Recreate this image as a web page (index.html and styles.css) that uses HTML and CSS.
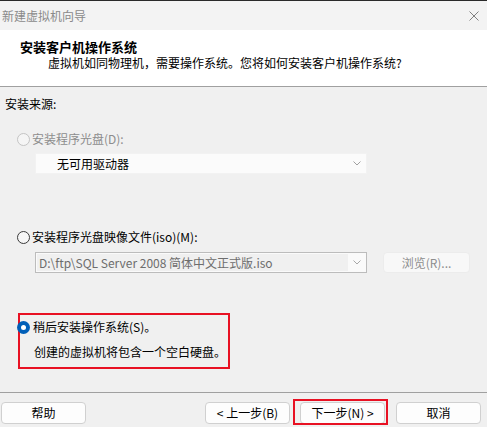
FILE: index.html
```html
<!DOCTYPE html>
<html lang="zh-CN">
<head>
<meta charset="utf-8">
<title>新建虚拟机向导</title>
<link rel="stylesheet" href="styles.css">
</head>
<body>
<div class="window">
  <div class="titlebar">
    <span class="title">新建虚拟机向导</span>
    <svg class="close" width="10" height="10" viewBox="0 0 10 10"><path d="M0.5 0.5L9.5 9.5M9.5 0.5L0.5 9.5" stroke="#808080" stroke-width="1" fill="none"/></svg>
  </div>
  <div class="header">
    <h1 class="head-title">安装客户机操作系统</h1>
    <p class="head-sub">虚拟机如同物理机，需要操作系统。您将如何安装客户机操作系统?</p>
  </div>
  <div class="content">
    <div class="label">安装来源:</div>
    <div class="radio-row row1 disabled">
      <span class="radio radio-disabled"></span>
      <span class="radio-text">安装程序光盘(D):</span>
    </div>
    <div class="combo combo-flat">
      <span class="combo-text">无可用驱动器</span>
      <svg class="chev" width="8" height="5" viewBox="0 0 8 5"><path d="M0.5 0.5L4 4L7.5 0.5" stroke="#a0a0a0" stroke-width="1" fill="none"/></svg>
    </div>
    <div class="radio-row row2">
      <span class="radio radio-off"></span>
      <span class="radio-text">安装程序光盘映像文件(iso)(M):</span>
    </div>
    <div class="iso-row">
      <div class="combo combo-box">
        <span class="combo-field">D:\ftp\SQL Server 2008 简体中文正式版.iso</span>
        <svg class="chev" width="8" height="5" viewBox="0 0 8 5"><path d="M0.5 0.5L4 4L7.5 0.5" stroke="#a8a8a8" stroke-width="1" fill="none"/></svg>
      </div>
      <div class="browse">浏览(R)...</div>
    </div>
    <div class="later">
      <div class="radio-row row3">
        <span class="radio radio-on"></span>
        <span class="radio-text dark">稍后安装操作系统(S)。</span>
      </div>
      <div class="later-desc">创建的虚拟机将包含一个空白硬盘。</div>
    </div>
  </div>
  <div class="footer">
    <button class="btn btn-help">帮助</button>
    <div class="spacer"></div>
    <button class="btn">&lt; 上一步(B)</button>
    <button class="btn btn-next">下一步(N) &gt;</button>
    <button class="btn btn-cancel">取消</button>
  </div>
</div>
</body>
</html>
```

FILE: styles.css
```css
* { box-sizing: border-box; }
html, body { margin: 0; padding: 0; }
body {
  width: 487px;
  height: 427px;
  overflow: hidden;
  background: #f0f0f0;
  font-family: "Noto Sans CJK SC", "Liberation Sans", sans-serif;
  font-size: 12px;
  color: #000;
}
.window {
  display: flex;
  flex-direction: column;
  height: 427px;
}
.titlebar {
  height: 30px;
  flex: none;
  background: #f3f3f3;
  border-top: 1px solid #2a2a2a;
  display: flex;
  align-items: center;
  justify-content: space-between;
  padding: 0 8px 0 2px;
}
.title {
  color: #8a8a8a;
  font-size: 12px;
  line-height: 16px;
}
.close { display: block; }
.header {
  height: 57px;
  flex: none;
  background: #fff;
  border-bottom: 1px solid #a0a0a0;
  padding: 8px 0 0 20px;
}
.head-title {
  margin: 0;
  font-size: 13px;
  line-height: 17px;
  font-weight: bold;
}
.head-sub {
  margin: 0;
  padding-left: 28px;
  font-size: 12px;
  line-height: 16px;
}
.content {
  flex: 1;
  padding-top: 9px;
  display: flex;
  flex-direction: column;
  align-items: flex-start;
}
.label {
  margin-left: 5px;
  line-height: 16px;
}
.radio-row {
  display: flex;
  align-items: center;
  height: 16px;
  margin-left: 17px;
}
.row1 { margin-top: 19px; }
.row2 { margin-top: 55px; }
.radio {
  width: 13px;
  height: 13px;
  border-radius: 50%;
  flex: none;
  margin-right: 2px;
}
.radio-disabled {
  border: 1px solid #c4c4c4;
  background: #f5f5f5;
}
.radio-off {
  border: 1px solid #3a3a3a;
  background: #f6f6f6;
}
.radio-on {
  background: #005fb8;
  position: relative;
  margin-right: 3px;
}
.radio-on::after {
  content: "";
  position: absolute;
  left: 4px;
  top: 4px;
  width: 5px;
  height: 5px;
  border-radius: 50%;
  background: #fff;
}
.radio-text { line-height: 16px; }
.disabled .radio-text { color: #8d8d8d; }
.combo {
  display: flex;
  align-items: center;
  height: 21px;
  width: 332px;
  margin-left: 35px;
}
.combo-flat {
  margin-top: 6px;
  background: #fbfbfb;
  border: 1px solid #f2f2f2;
  padding: 0 5px 0 21px;
  justify-content: space-between;
}
.combo-text { line-height: 16px; }
.chev { display: block; }
.iso-row {
  display: flex;
  align-items: center;
  margin-top: 7px;
}
.combo-box {
  border: 1px solid #bcbcbc;
  background: #fafafa;
  padding: 1px 5px 1px 1px;
}
.combo-field {
  flex: 1;
  align-self: stretch;
  background: #f0f0f0;
  color: #6d6d6d;
  line-height: 17px;
  padding-left: 2px;
  margin-right: 5px;
  white-space: nowrap;
  overflow: hidden;
}
.browse {
  margin-left: 16px;
  width: 87px;
  height: 21px;
  border: 1px solid #ececec;
  border-radius: 4px;
  background: #f8f8f8;
  color: #8d8d8d;
  text-align: center;
  line-height: 19px;
}
.later {
  margin-top: 40px;
  margin-left: 18px;
  width: 212px;
  height: 56px;
  border: 2px solid #e81123;
  padding-top: 4px;
}
.row3 { margin-left: -3px; }
.dark { color: #000; }
.later-desc {
  margin-top: 9px;
  padding-left: 14px;
  line-height: 16px;
}
.footer {
  flex: none;
  height: 35px;
  border-top: 1px solid #a0a0a0;
  padding: 9px 6px 0 1px;
  display: flex;
  align-items: flex-start;
}
.spacer { flex: 1; }
.btn {
  width: 85px;
  height: 22px;
  border: 1px solid #d0d0d0;
  border-radius: 4px;
  background: #fdfdfd;
  font-family: inherit;
  font-size: 12px;
  color: #000;
  padding: 0;
  line-height: 20px;
}
.btn-next {
  margin-left: 10px;
  position: relative;
}
.btn-next::after {
  content: "";
  position: absolute;
  top: -4px;
  left: -8px;
  right: -4px;
  bottom: -2px;
  border: 2px solid #e81123;
}
.btn-cancel { margin-left: 11px; }
```
